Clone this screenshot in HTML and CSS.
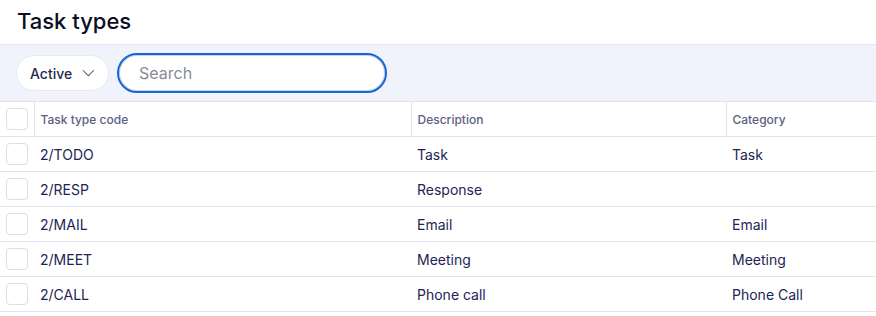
FILE: index.html
```html
<!DOCTYPE html>
<html lang="en">

<head>
    <meta charset="UTF-8">
    <meta name="viewport" content="width=device-width, initial-scale=1.0">
    <title>Task types</title>
    <link rel="stylesheet" href="styles.css">
</head>

<body>
    <header class="page-head">
        <h1 class="title">Task types</h1>
    </header>

    <div class="toolbar">
        <button class="status-btn">Active
            <svg width="14" height="8" viewBox="0 0 14 8" fill="none">
                <path d="M1 1l6 6 6-6" stroke="#4a4e6a" stroke-width="1.1" />
            </svg>
        </button>
        <input class="search" type="text" placeholder="Search">
    </div>

    <table class="grid">
        <thead>
            <tr>
                <th class="check-col"><span class="check"></span></th>
                <th class="code-col">Task type code</th>
                <th class="desc-col">Description</th>
                <th>Category</th>
            </tr>
        </thead>
        <tbody>
            <tr>
                <td class="check-col"><span class="check"></span></td>
                <td>2/TODO</td>
                <td>Task</td>
                <td>Task</td>
            </tr>
            <tr>
                <td class="check-col"><span class="check"></span></td>
                <td>2/RESP</td>
                <td>Response</td>
                <td></td>
            </tr>
            <tr>
                <td class="check-col"><span class="check"></span></td>
                <td>2/MAIL</td>
                <td>Email</td>
                <td>Email</td>
            </tr>
            <tr>
                <td class="check-col"><span class="check"></span></td>
                <td>2/MEET</td>
                <td>Meeting</td>
                <td>Meeting</td>
            </tr>
            <tr>
                <td class="check-col"><span class="check"></span></td>
                <td>2/CALL</td>
                <td>Phone call</td>
                <td>Phone Call</td>
            </tr>
        </tbody>
    </table>
</body>

</html>
```

FILE: styles.css
```css
* {
    margin: 0;
    padding: 0;
    box-sizing: border-box;
}

body {
    font-family: Inter, 'Noto Sans', sans-serif;
    background-color: #fff;
    color: #1e2455;
}

.page-head {
    height: 45px;
    padding: 7px 17px 0;
    border-bottom: 1px solid #e4e6ee;
}

.title {
    font-size: 22px;
    font-weight: 500;
    color: #0c0d22;
    line-height: 28px;
}

.toolbar {
    height: 56px;
    display: flex;
    align-items: center;
    gap: 8px;
    padding: 0 16px;
    background-color: #f0f2fc;
}

.status-btn {
    height: 36px;
    width: 93px;
    display: flex;
    align-items: center;
    gap: 10px;
    padding: 0 13px;
    background: #fff;
    border: 1px solid #e8eaf2;
    border-radius: 18px;
    font-family: inherit;
    font-size: 14px;
    font-weight: 500;
    color: #262a4d;
}

.search {
    width: 270px;
    height: 40px;
    border: 2px solid #1566d9;
    border-radius: 20px;
    padding: 0 20px;
    font-family: inherit;
    font-size: 16px;
    color: #1e2455;
    outline: none;
    background: #fff;
    box-shadow: inset 0 0 0 1px rgba(60, 70, 110, 0.25);
}

.search::placeholder {
    color: #878a99;
}

.grid {
    width: 100%;
    border-collapse: collapse;
    table-layout: fixed;
    border-top: 1px solid #e2e4ec;
}

.grid th,
.grid td {
    height: 35px;
    padding: 0 6px;
    text-align: left;
    border-bottom: 1px solid #e2e4ec;
    font-size: 14px;
    font-weight: 400;
    white-space: nowrap;
}

.grid th {
    font-size: 12px;
    font-weight: 500;
    color: #5c6082;
    border-right: 1px solid #e2e4ec;
}

.grid th:last-child {
    border-right: none;
}

.check-col {
    width: 34px;
}

.code-col {
    width: 377px;
}

.desc-col {
    width: 315px;
}

.check {
    display: block;
    width: 22px;
    height: 22px;
    border: 1px solid #dcdee5;
    border-radius: 4px;
    background: #fff;
}
```
